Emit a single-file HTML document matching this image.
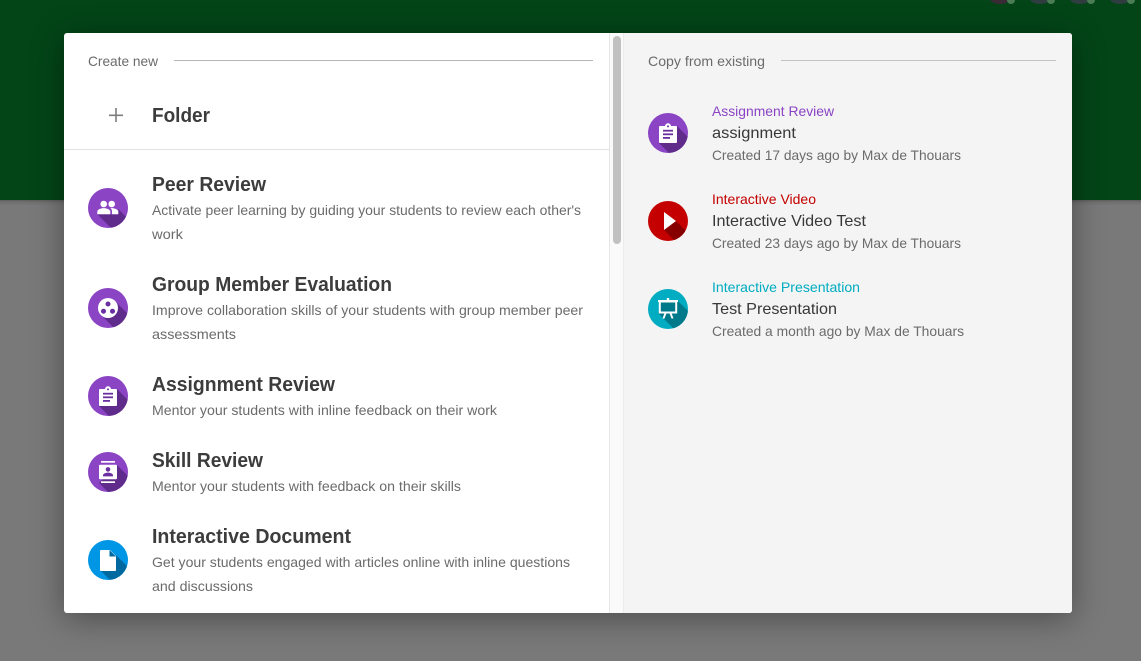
<!DOCTYPE html>
<html><head><meta charset="utf-8"><style>
html,body{margin:0;padding:0;width:1141px;height:661px;overflow:hidden;background:#797979}
#g{position:absolute;left:0;top:0;width:1141px;height:200px;background:#034517}
#l{position:absolute;left:0;top:200px;width:1141px;height:6px;background:linear-gradient(#5c5f5a,#707070 35%,#797979)}
#m{position:absolute;left:64px;top:33px;width:1008px;height:580px;background:#fff;border-radius:3px;box-shadow:0 5px 32px rgba(0,0,0,.38)}
svg{position:absolute;left:0;top:0}
text{font-family:"Liberation Sans",sans-serif;font-size:14px;fill:#6b6b6b}
.h{font-size:20px;font-weight:bold;fill:#3c3c3c}
.t{font-size:16px;fill:#383838}
</style></head><body>
<div id="g"></div>
<div id="l"></div>
<div id="m"></div>
<svg width="1141" height="661" viewBox="0 0 1141 661" xmlns="http://www.w3.org/2000/svg">
<defs>
<clipPath id="modal"><rect x="64" y="33" width="1008" height="580" rx="3"/></clipPath>
<clipPath id="c"><circle cx="0" cy="0" r="20"/></clipPath>
</defs>
<!-- top avatars -->
<ellipse cx="1000" cy="-3" rx="11" ry="7" fill="#3a2a35"/>
<ellipse cx="1040" cy="-3" rx="11" ry="7" fill="#2f3d40"/>
<ellipse cx="1080" cy="-3" rx="11" ry="7" fill="#2f3d40"/>
<ellipse cx="1120" cy="-3" rx="11" ry="7" fill="#2f3d40"/>
<circle cx="1011" cy="0" r="4" fill="#4a7d53"/><circle cx="1051" cy="0" r="4" fill="#4a7d53"/><circle cx="1091" cy="0" r="4" fill="#4a7d53"/><circle cx="1131" cy="0" r="4" fill="#4a7d53"/>

<g clip-path="url(#modal)">
<rect x="624" y="33" width="448" height="580" fill="#f4f4f4"/>
<rect x="610" y="33" width="14" height="580" fill="#fafafa"/>
<rect x="609" y="33" width="1" height="580" fill="#e6e6e6"/>
<rect x="623" y="33" width="1" height="580" fill="#ececec"/>
<rect x="613" y="36" width="8" height="208" rx="4" fill="#c1c1c1"/>
</g>
<rect x="64" y="149" width="545" height="1" fill="#e2e2e2"/>

<!-- left header -->
<text x="88" y="66" textLength="70" lengthAdjust="spacingAndGlyphs">Create new</text>
<rect x="174" y="60" width="419" height="1" fill="#b5b5b5"/>
<rect x="109" y="114.5" width="14" height="1.6" fill="#7c7c7c"/>
<rect x="115.2" y="108" width="1.6" height="14" fill="#7c7c7c"/>
<text class="h" x="152" y="122" textLength="58" lengthAdjust="spacingAndGlyphs">Folder</text>

<!-- left list text -->
<text class="h" x="152" y="191" textLength="114" lengthAdjust="spacingAndGlyphs">Peer Review</text>
<text x="152" y="215" textLength="429" lengthAdjust="spacingAndGlyphs">Activate peer learning by guiding your students to review each other's</text>
<text x="152" y="239" textLength="31" lengthAdjust="spacingAndGlyphs">work</text>

<text class="h" x="152" y="291" textLength="240" lengthAdjust="spacingAndGlyphs">Group Member Evaluation</text>
<text x="152" y="315" textLength="431" lengthAdjust="spacingAndGlyphs">Improve collaboration skills of your students with group member peer</text>
<text x="152" y="339" textLength="84" lengthAdjust="spacingAndGlyphs">assessments</text>

<text class="h" x="152" y="391" textLength="183" lengthAdjust="spacingAndGlyphs">Assignment Review</text>
<text x="152" y="415" textLength="345" lengthAdjust="spacingAndGlyphs">Mentor your students with inline feedback on their work</text>

<text class="h" x="152" y="467" textLength="111" lengthAdjust="spacingAndGlyphs">Skill Review</text>
<text x="152" y="491" textLength="309" lengthAdjust="spacingAndGlyphs">Mentor your students with feedback on their skills</text>

<text class="h" x="152" y="543" textLength="199" lengthAdjust="spacingAndGlyphs">Interactive Document</text>
<text x="152" y="567" textLength="418" lengthAdjust="spacingAndGlyphs">Get your students engaged with articles online with inline questions</text>
<text x="152" y="591" textLength="101" lengthAdjust="spacingAndGlyphs">and discussions</text>

<!-- right text -->
<text x="648" y="66" textLength="117" lengthAdjust="spacingAndGlyphs">Copy from existing</text>
<rect x="781" y="60" width="275" height="1" fill="#c4c4c4"/>

<text x="712" y="116" textLength="122" lengthAdjust="spacingAndGlyphs" style="fill:#8a44c4">Assignment Review</text>
<text class="t" x="712" y="138" textLength="84" lengthAdjust="spacingAndGlyphs">assignment</text>
<text x="712" y="160" textLength="249" lengthAdjust="spacingAndGlyphs">Created 17 days ago by Max de Thouars</text>

<text x="712" y="204" textLength="104" lengthAdjust="spacingAndGlyphs" style="fill:#c40000">Interactive Video</text>
<text class="t" x="712" y="226" textLength="154" lengthAdjust="spacingAndGlyphs">Interactive Video Test</text>
<text x="712" y="248" textLength="249" lengthAdjust="spacingAndGlyphs">Created 23 days ago by Max de Thouars</text>

<text x="712" y="292" textLength="148" lengthAdjust="spacingAndGlyphs" style="fill:#00acc1">Interactive Presentation</text>
<text class="t" x="712" y="314" textLength="125" lengthAdjust="spacingAndGlyphs">Test Presentation</text>
<text x="712" y="336" textLength="252" lengthAdjust="spacingAndGlyphs">Created a month ago by Max de Thouars</text>

<!-- people -->
<g transform="translate(108,208)">
<circle r="20" fill="#8a44c4"/>
<g clip-path="url(#c)"><polygon points="10.3,1 10.3,6.3 -10.7,6.3 19,36 40,31" fill="#5f2c8c"/></g>
<circle cx="-4.3" cy="-4" r="3.3" fill="#fff"/><circle cx="3.7" cy="-4" r="3.3" fill="#fff"/>
<path d="M-10.7 6.3V3.6c0-2.4 4-3.5 6.4-3.5s6.6 1.1 6.6 3.5v2.7z" fill="#fff"/>
<path d="M4 6.3V3.6c0-1.4-.5-2.5-1.6-3.3 .5-.1 1-.2 1.4-.2 2.4 0 6.5 1.1 6.5 3.5v2.7z" fill="#fff"/>
</g>
<!-- group -->
<g transform="translate(108,308)">
<circle r="20" fill="#8a44c4"/>
<g clip-path="url(#c)"><polygon points="7,-7 -7,7 23,37 37,23" fill="#5f2c8c"/></g>
<circle r="10" fill="#fff"/>
<circle cx="0" cy="-4" r="2.5" fill="#6a2fa0"/><circle cx="-4.5" cy="3.2" r="2.5" fill="#6a2fa0"/><circle cx="4.5" cy="3.2" r="2.5" fill="#6a2fa0"/>
</g>
<!-- clipboard left -->
<g transform="translate(108,396)">
<circle r="20" fill="#8a44c4"/>
<g clip-path="url(#c)"><polygon points="9,-7 -9,10 21,40 39,23" fill="#5f2c8c"/></g>
<path d="M-8 -7h5c.3-1.5 1.4-2.7 3-2.7s2.7 1.2 3 2.7h5c.6 0 1 .4 1 1v15c0 .6-.4 1-1 1H-8c-.6 0-1-.4-1-1V-6c0-.6.4-1 1-1z" fill="#fff"/>
<circle cx="0" cy="-6.6" r="1" fill="#6a2fa0"/>
<rect x="-5" y="-3.2" width="10" height="1.8" fill="#6a2fa0"/><rect x="-5" y="0.4" width="10" height="1.8" fill="#6a2fa0"/><rect x="-5" y="4" width="7" height="1.8" fill="#6a2fa0"/>
</g>
<!-- skill -->
<g transform="translate(108,472)">
<circle r="20" fill="#8a44c4"/>
<g clip-path="url(#c)"><polygon points="9,-7 -9,11 21,41 39,23" fill="#5f2c8c"/></g>
<rect x="-7" y="-11" width="14" height="1.7" fill="#fff"/>
<rect x="-7" y="9.3" width="14" height="1.7" fill="#fff"/>
<rect x="-9" y="-7.2" width="18" height="14.4" rx="1" fill="#fff"/>
<circle cx="0" cy="-2.6" r="2.3" fill="#6a2fa0"/>
<path d="M-5 4.4v-1.2c0-1.7 3.3-2.6 5-2.6s5 .9 5 2.6v1.2z" fill="#6a2fa0"/>
</g>
<!-- document -->
<g transform="translate(108,560)">
<circle r="20" fill="#0096e6"/>
<g clip-path="url(#c)"><polygon points="8,-5 -8,10 22,40 38,25" fill="#00699f"/></g>
<path d="M-7 -10h9l6 6v14c0 .6-.4 1-1 1H-7c-.6 0-1-.4-1-1V-9c0-.6.4-1 1-1z" fill="#fff"/>
<path d="M1.5 -10L8 -3.5H1.5z" fill="#00699f"/>
</g>
<!-- clipboard right -->
<g transform="translate(668,133)">
<circle r="20" fill="#8a44c4"/>
<g clip-path="url(#c)"><polygon points="9,-7 -9,10 21,40 39,23" fill="#5f2c8c"/></g>
<path d="M-8 -7h5c.3-1.5 1.4-2.7 3-2.7s2.7 1.2 3 2.7h5c.6 0 1 .4 1 1v15c0 .6-.4 1-1 1H-8c-.6 0-1-.4-1-1V-6c0-.6.4-1 1-1z" fill="#fff"/>
<circle cx="0" cy="-6.6" r="1" fill="#6a2fa0"/>
<rect x="-5" y="-3.2" width="10" height="1.8" fill="#6a2fa0"/><rect x="-5" y="0.4" width="10" height="1.8" fill="#6a2fa0"/><rect x="-5" y="4" width="7" height="1.8" fill="#6a2fa0"/>
</g>
<!-- play -->
<g transform="translate(668,221)">
<circle r="20" fill="#c40000"/>
<g clip-path="url(#c)"><polygon points="8,0 -4,9 26,39 38,30" fill="#860000"/></g>
<path d="M-4 -9L8 0L-4 9z" fill="#fff"/>
</g>
<!-- presentation -->
<g transform="translate(668,309)">
<circle r="20" fill="#00acc1"/>
<g clip-path="url(#c)"><polygon points="10,-8 -10,4 -5,9 25,39 40,22" fill="#007a8a"/></g>
<rect x="-1.2" y="-11" width="2.4" height="3" fill="#fff"/>
<rect x="-10" y="-9" width="20" height="2" fill="#fff"/>
<rect x="-8.2" y="-7.5" width="16.4" height="11" fill="#007a8a" stroke="#fff" stroke-width="2"/>
<path d="M-3.5 4L-5.5 9.5H-3.5L-1.6 4.5zM3.5 4L5.5 9.5H3.5L1.6 4.5z" fill="#fff"/>
</g>
</svg>
</body></html>
